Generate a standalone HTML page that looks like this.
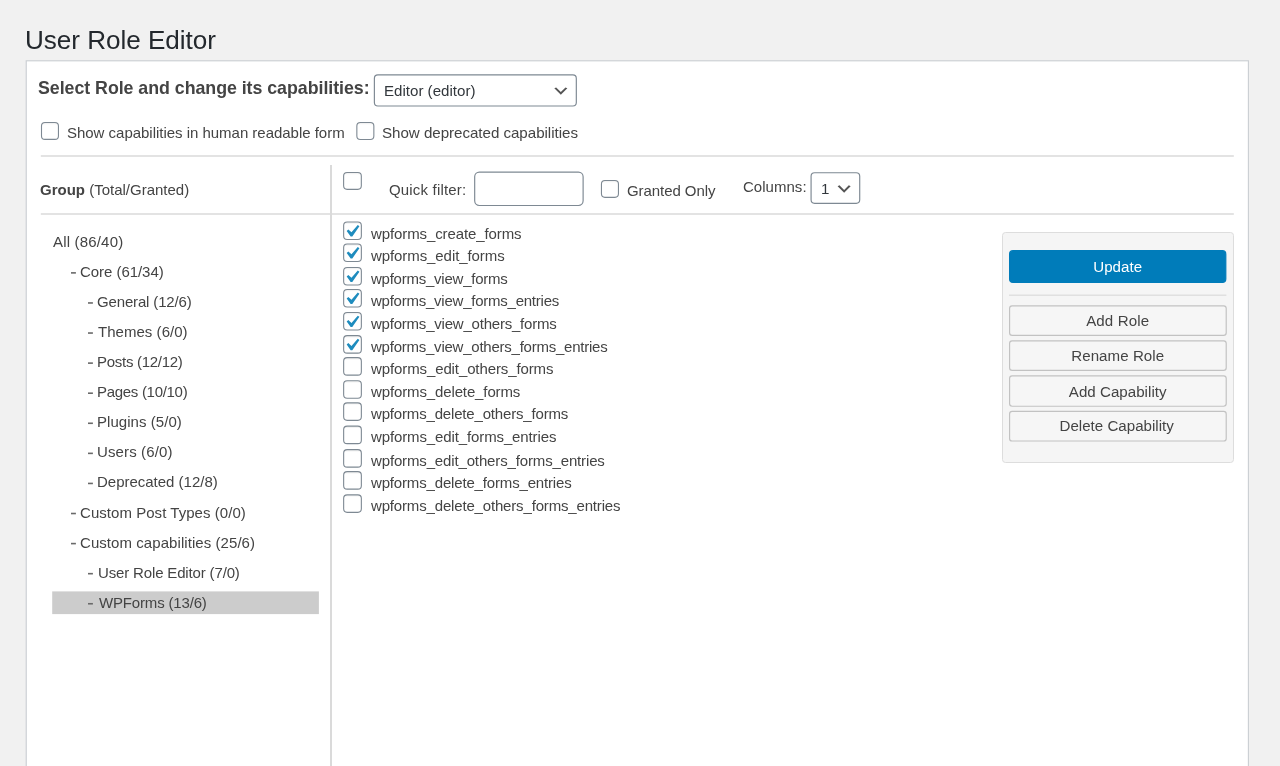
<!DOCTYPE html>
<html><head><meta charset="utf-8">
<style>
html,body{margin:0;padding:0;}
body{width:1280px;height:766px;overflow:hidden;background:#f1f1f1;font-family:"Liberation Sans",sans-serif;color:#444444;position:relative;}
.a{position:absolute;white-space:nowrap;will-change:transform;}
svg.bg{position:absolute;left:0;top:0;}
</style></head><body>
<svg class="bg" width="1280" height="766" viewBox="0 0 1280 766">
<rect x="0" y="0" width="1280" height="766" fill="#f1f1f1"/>
<rect x="26.253" y="60.783" width="1222.163" height="738.633" rx="0.000" fill="#fff" stroke="#ccd0d4" stroke-width="1.167" />
<rect x="52.2" y="591.4" width="266.7" height="22.7" fill="#cccccc"/>
<rect x="40.8" y="155" width="1193" height="2" fill="#e3e3e3"/>
<rect x="40.8" y="213" width="1193" height="2" fill="#e3e3e3"/>
<rect x="330" y="165" width="2" height="620" fill="#dadada"/>
<g><rect x="41.500" y="122.500" width="16.950" height="16.900" rx="3.500" fill="#fff" stroke="#7e8993" stroke-width="1.100" /><rect x="42.050" y="123.050" width="15.850" height="1.2" fill="rgba(0,0,0,0.05)" rx="1"/></g>
<g><rect x="356.850" y="122.550" width="17.000" height="16.900" rx="3.500" fill="#fff" stroke="#7e8993" stroke-width="1.100" /><rect x="357.400" y="123.100" width="15.900" height="1.2" fill="rgba(0,0,0,0.05)" rx="1"/></g>
<rect x="374.383" y="74.883" width="201.933" height="31.133" rx="3.500" fill="#fff" stroke="#7e8993" stroke-width="1.167" />
<g transform="translate(551.500,81.800) scale(0.9333)"><path d="M5 6l5 5 5-5 2 1-7 7-7-7 2-1z" fill="#555"/></g>
<g><rect x="343.620" y="172.450" width="17.700" height="16.900" rx="3.500" fill="#fff" stroke="#7e8993" stroke-width="1.100" /><rect x="344.170" y="173.000" width="16.600" height="1.2" fill="rgba(0,0,0,0.05)" rx="1"/></g>
<rect x="474.683" y="172.083" width="108.433" height="33.433" rx="4.667" fill="#fff" stroke="#7e8993" stroke-width="1.167" />
<g><rect x="601.450" y="180.450" width="17.000" height="16.900" rx="3.500" fill="#fff" stroke="#7e8993" stroke-width="1.100" /><rect x="602.000" y="181.000" width="15.900" height="1.2" fill="rgba(0,0,0,0.05)" rx="1"/></g>
<rect x="811.083" y="172.783" width="48.633" height="30.533" rx="3.500" fill="#fff" stroke="#7e8993" stroke-width="1.167" />
<g transform="translate(834.800,179.700) scale(0.9333)"><path d="M5 6l5 5 5-5 2 1-7 7-7-7 2-1z" fill="#555"/></g>
<g><rect x="343.650" y="221.950" width="17.700" height="17.500" rx="3.500" fill="#fff" stroke="#7e8993" stroke-width="1.100" /><rect x="344.200" y="222.500" width="16.600" height="1.2" fill="rgba(0,0,0,0.05)" rx="1"/><g transform="translate(339.600,219.067) scale(1.225)"><path d="M14.83 4.89l1.34.94-5.81 8.38H9.02L5.78 9.67l1.34-1.25 2.57 2.4z" fill="#1e8cbe"/></g></g>
<g><rect x="343.650" y="243.950" width="17.700" height="17.500" rx="3.500" fill="#fff" stroke="#7e8993" stroke-width="1.100" /><rect x="344.200" y="244.500" width="16.600" height="1.2" fill="rgba(0,0,0,0.05)" rx="1"/><g transform="translate(339.600,241.067) scale(1.225)"><path d="M14.83 4.89l1.34.94-5.81 8.38H9.02L5.78 9.67l1.34-1.25 2.57 2.4z" fill="#1e8cbe"/></g></g>
<g><rect x="343.650" y="267.450" width="17.700" height="17.500" rx="3.500" fill="#fff" stroke="#7e8993" stroke-width="1.100" /><rect x="344.200" y="268.000" width="16.600" height="1.2" fill="rgba(0,0,0,0.05)" rx="1"/><g transform="translate(339.600,264.567) scale(1.225)"><path d="M14.83 4.89l1.34.94-5.81 8.38H9.02L5.78 9.67l1.34-1.25 2.57 2.4z" fill="#1e8cbe"/></g></g>
<g><rect x="343.650" y="289.450" width="17.700" height="17.500" rx="3.500" fill="#fff" stroke="#7e8993" stroke-width="1.100" /><rect x="344.200" y="290.000" width="16.600" height="1.2" fill="rgba(0,0,0,0.05)" rx="1"/><g transform="translate(339.600,286.567) scale(1.225)"><path d="M14.83 4.89l1.34.94-5.81 8.38H9.02L5.78 9.67l1.34-1.25 2.57 2.4z" fill="#1e8cbe"/></g></g>
<g><rect x="343.650" y="312.550" width="17.700" height="17.500" rx="3.500" fill="#fff" stroke="#7e8993" stroke-width="1.100" /><rect x="344.200" y="313.100" width="16.600" height="1.2" fill="rgba(0,0,0,0.05)" rx="1"/><g transform="translate(339.600,309.667) scale(1.225)"><path d="M14.83 4.89l1.34.94-5.81 8.38H9.02L5.78 9.67l1.34-1.25 2.57 2.4z" fill="#1e8cbe"/></g></g>
<g><rect x="343.650" y="335.650" width="17.700" height="17.500" rx="3.500" fill="#fff" stroke="#7e8993" stroke-width="1.100" /><rect x="344.200" y="336.200" width="16.600" height="1.2" fill="rgba(0,0,0,0.05)" rx="1"/><g transform="translate(339.600,332.767) scale(1.225)"><path d="M14.83 4.89l1.34.94-5.81 8.38H9.02L5.78 9.67l1.34-1.25 2.57 2.4z" fill="#1e8cbe"/></g></g>
<g><rect x="343.650" y="357.650" width="17.700" height="17.500" rx="3.500" fill="#fff" stroke="#7e8993" stroke-width="1.100" /><rect x="344.200" y="358.200" width="16.600" height="1.2" fill="rgba(0,0,0,0.05)" rx="1"/></g>
<g><rect x="343.650" y="380.750" width="17.700" height="17.500" rx="3.500" fill="#fff" stroke="#7e8993" stroke-width="1.100" /><rect x="344.200" y="381.300" width="16.600" height="1.2" fill="rgba(0,0,0,0.05)" rx="1"/></g>
<g><rect x="343.650" y="402.850" width="17.700" height="17.500" rx="3.500" fill="#fff" stroke="#7e8993" stroke-width="1.100" /><rect x="344.200" y="403.400" width="16.600" height="1.2" fill="rgba(0,0,0,0.05)" rx="1"/></g>
<g><rect x="343.650" y="426.150" width="17.700" height="17.500" rx="3.500" fill="#fff" stroke="#7e8993" stroke-width="1.100" /><rect x="344.200" y="426.700" width="16.600" height="1.2" fill="rgba(0,0,0,0.05)" rx="1"/></g>
<g><rect x="343.650" y="449.650" width="17.700" height="17.500" rx="3.500" fill="#fff" stroke="#7e8993" stroke-width="1.100" /><rect x="344.200" y="450.200" width="16.600" height="1.2" fill="rgba(0,0,0,0.05)" rx="1"/></g>
<g><rect x="343.650" y="471.650" width="17.700" height="17.500" rx="3.500" fill="#fff" stroke="#7e8993" stroke-width="1.100" /><rect x="344.200" y="472.200" width="16.600" height="1.2" fill="rgba(0,0,0,0.05)" rx="1"/></g>
<g><rect x="343.650" y="494.850" width="17.700" height="17.500" rx="3.500" fill="#fff" stroke="#7e8993" stroke-width="1.100" /><rect x="344.200" y="495.400" width="16.600" height="1.2" fill="rgba(0,0,0,0.05)" rx="1"/></g>
<rect x="1002.5" y="232.5" width="231" height="230" rx="3" fill="#f5f5f5" stroke="#dddddd" stroke-width="1"/>
<rect x="1009.583" y="250.683" width="216.233" height="31.833" rx="3.500" fill="#007cba" stroke="#007cba" stroke-width="1.167" />
<rect x="1009" y="294.5" width="217.4" height="1.5" fill="#e0e0e0"/>
<rect x="1009.583" y="305.883" width="216.633" height="29.533" rx="2.600" fill="#f6f6f6" stroke="#c2c2c2" stroke-width="1.167" />
<rect x="1009.583" y="340.883" width="216.633" height="29.533" rx="2.600" fill="#f6f6f6" stroke="#c2c2c2" stroke-width="1.167" />
<rect x="1009.583" y="375.883" width="216.633" height="30.333" rx="2.600" fill="#f6f6f6" stroke="#c2c2c2" stroke-width="1.167" />
<rect x="1009.583" y="411.383" width="216.633" height="29.633" rx="2.600" fill="#f6f6f6" stroke="#c2c2c2" stroke-width="1.167" />
<rect x="71.00" y="272.08" width="4.9" height="1.6" fill="#6a6a6a"/>
<rect x="88.00" y="302.16" width="4.9" height="1.6" fill="#6a6a6a"/>
<rect x="88.00" y="332.24" width="4.9" height="1.6" fill="#6a6a6a"/>
<rect x="88.00" y="362.32" width="4.9" height="1.6" fill="#6a6a6a"/>
<rect x="88.00" y="392.40" width="4.9" height="1.6" fill="#6a6a6a"/>
<rect x="88.00" y="422.48" width="4.9" height="1.6" fill="#6a6a6a"/>
<rect x="88.00" y="452.56" width="4.9" height="1.6" fill="#6a6a6a"/>
<rect x="88.00" y="482.64" width="4.9" height="1.6" fill="#6a6a6a"/>
<rect x="71.00" y="512.72" width="4.9" height="1.6" fill="#6a6a6a"/>
<rect x="71.00" y="542.80" width="4.9" height="1.6" fill="#6a6a6a"/>
<rect x="88.00" y="572.88" width="4.9" height="1.6" fill="#6a6a6a"/>
<rect x="88.00" y="602.96" width="4.9" height="1.6" fill="#6a6a6a"/>
</svg>
<div class="a" id="t0" style="left:24.60px;top:24.50px;font-size:26.1px;line-height:31.32px;color:#23282d;font-weight:400;letter-spacing:-0.0267px;">User Role Editor</div>
<div class="a" id="t1" style="left:38.40px;top:77.85px;font-size:17.8px;line-height:21.36px;color:#444444;font-weight:700;letter-spacing:-0.0359px;">Select Role and change its capabilities:</div>
<div class="a" id="t2" style="left:383.60px;top:81.71px;font-size:15.1px;line-height:18.12px;color:#32373c;font-weight:400;">Editor (editor)</div>
<div class="a" id="t3" style="left:66.80px;top:124.30px;font-size:15.0px;line-height:18.0px;color:#444444;font-weight:400;letter-spacing:-0.0218px;">Show capabilities in human readable form</div>
<div class="a" id="t4" style="left:382.20px;top:124.36px;font-size:15.15px;line-height:18.18px;color:#444444;font-weight:400;letter-spacing:-0.0370px;">Show deprecated capabilities</div>
<div class="a" id="t5" style="left:40.20px;top:180.80px;font-size:15.0px;line-height:18.0px;color:#444444;font-weight:400;"><b>Group</b> (Total/Granted)</div>
<div class="a" id="t6" style="left:388.80px;top:181.30px;font-size:15.0px;line-height:18.0px;color:#444444;font-weight:400;letter-spacing:0.1750px;">Quick filter:</div>
<div class="a" id="t7" style="left:627.30px;top:182.40px;font-size:15.0px;line-height:18.0px;color:#444444;font-weight:400;letter-spacing:-0.0727px;">Granted Only</div>
<div class="a" id="t8" style="left:742.70px;top:177.90px;font-size:15.0px;line-height:18.0px;color:#444444;font-weight:400;letter-spacing:0.0286px;">Columns:</div>
<div class="a" id="t9" style="left:821.00px;top:179.81px;font-size:15.1px;line-height:18.12px;color:#32373c;font-weight:400;">1</div>
<div class="a" id="t10" style="left:53.40px;top:232.70px;font-size:15.0px;line-height:18.0px;color:#444444;font-weight:400;letter-spacing:0.1800px;">All (86/40)</div>
<div class="a" id="t11" style="left:80.30px;top:262.78px;font-size:15.0px;line-height:18.0px;color:#444444;font-weight:400;letter-spacing:-0.0455px;">Core (61/34)</div>
<div class="a" id="t12" style="left:96.80px;top:292.86px;font-size:15.0px;line-height:18.0px;color:#444444;font-weight:400;letter-spacing:-0.1538px;">General (12/6)</div>
<div class="a" id="t13" style="left:98.00px;top:322.94px;font-size:15.0px;line-height:18.0px;color:#444444;font-weight:400;letter-spacing:0.0364px;">Themes (6/0)</div>
<div class="a" id="t14" style="left:97.00px;top:353.02px;font-size:15.0px;line-height:18.0px;color:#444444;font-weight:400;letter-spacing:-0.2833px;">Posts (12/12)</div>
<div class="a" id="t15" style="left:97.00px;top:383.10px;font-size:15.0px;line-height:18.0px;color:#444444;font-weight:400;letter-spacing:-0.3000px;">Pages (10/10)</div>
<div class="a" id="t16" style="left:97.00px;top:413.18px;font-size:15.0px;line-height:18.0px;color:#444444;font-weight:400;letter-spacing:0.0500px;">Plugins (5/0)</div>
<div class="a" id="t17" style="left:97.00px;top:443.26px;font-size:15.0px;line-height:18.0px;color:#444444;font-weight:400;letter-spacing:0.1200px;">Users (6/0)</div>
<div class="a" id="t18" style="left:97.00px;top:473.34px;font-size:15.0px;line-height:18.0px;color:#444444;font-weight:400;letter-spacing:-0.0125px;">Deprecated (12/8)</div>
<div class="a" id="t19" style="left:79.80px;top:504.02px;font-size:15.0px;line-height:18.0px;color:#444444;font-weight:400;letter-spacing:0.0455px;">Custom Post Types (0/0)</div>
<div class="a" id="t20" style="left:79.80px;top:533.50px;font-size:15.0px;line-height:18.0px;color:#444444;font-weight:400;letter-spacing:0.0640px;">Custom capabilities (25/6)</div>
<div class="a" id="t21" style="left:97.80px;top:563.58px;font-size:15.0px;line-height:18.0px;color:#444444;font-weight:400;letter-spacing:-0.1524px;">User Role Editor (7/0)</div>
<div class="a" id="t22" style="left:98.60px;top:593.66px;font-size:15.0px;line-height:18.0px;color:#444444;font-weight:400;letter-spacing:-0.1692px;">WPForms (13/6)</div>
<div class="a" id="t23" style="left:371.10px;top:224.60px;font-size:15.0px;line-height:18.0px;color:#444444;font-weight:400;letter-spacing:-0.1053px;">wpforms_create_forms</div>
<div class="a" id="t24" style="left:370.80px;top:246.50px;font-size:15.0px;line-height:18.0px;color:#444444;font-weight:400;letter-spacing:-0.0824px;">wpforms_edit_forms</div>
<div class="a" id="t25" style="left:371.10px;top:269.70px;font-size:15.0px;line-height:18.0px;color:#444444;font-weight:400;letter-spacing:-0.2412px;">wpforms_view_forms</div>
<div class="a" id="t26" style="left:370.80px;top:291.70px;font-size:15.0px;line-height:18.0px;color:#444444;font-weight:400;letter-spacing:-0.2400px;">wpforms_view_forms_entries</div>
<div class="a" id="t27" style="left:371.10px;top:314.70px;font-size:15.0px;line-height:18.0px;color:#444444;font-weight:400;letter-spacing:-0.2167px;">wpforms_view_others_forms</div>
<div class="a" id="t28" style="left:371.10px;top:337.70px;font-size:15.0px;line-height:18.0px;color:#444444;font-weight:400;letter-spacing:-0.2375px;">wpforms_view_others_forms_entries</div>
<div class="a" id="t29" style="left:370.80px;top:360.00px;font-size:15.0px;line-height:18.0px;color:#444444;font-weight:400;letter-spacing:-0.1083px;">wpforms_edit_others_forms</div>
<div class="a" id="t30" style="left:371.10px;top:383.20px;font-size:15.0px;line-height:18.0px;color:#444444;font-weight:400;letter-spacing:-0.1263px;">wpforms_delete_forms</div>
<div class="a" id="t31" style="left:371.10px;top:405.40px;font-size:15.0px;line-height:18.0px;color:#444444;font-weight:400;letter-spacing:-0.1692px;">wpforms_delete_others_forms</div>
<div class="a" id="t32" style="left:370.80px;top:428.40px;font-size:15.0px;line-height:18.0px;color:#444444;font-weight:400;letter-spacing:-0.1200px;">wpforms_edit_forms_entries</div>
<div class="a" id="t33" style="left:371.10px;top:451.50px;font-size:15.0px;line-height:18.0px;color:#444444;font-weight:400;letter-spacing:-0.1437px;">wpforms_edit_others_forms_entries</div>
<div class="a" id="t34" style="left:370.80px;top:473.50px;font-size:15.0px;line-height:18.0px;color:#444444;font-weight:400;letter-spacing:-0.1630px;">wpforms_delete_forms_entries</div>
<div class="a" id="t35" style="left:371.10px;top:496.80px;font-size:15.0px;line-height:18.0px;color:#444444;font-weight:400;letter-spacing:-0.1647px;">wpforms_delete_others_forms_entries</div>
<div class="a" id="t36" style="left:1008.80px;top:257.91px;font-size:15.1px;line-height:18.12px;color:#ffffff;font-weight:400;width:217.4px;text-align:center;letter-spacing:0.0600px;">Update</div>
<div class="a" id="t37" style="left:1009.10px;top:312.21px;font-size:15.1px;line-height:18.12px;color:#444444;font-weight:400;width:217.4px;text-align:center;letter-spacing:0.1286px;">Add Role</div>
<div class="a" id="t38" style="left:1008.80px;top:346.61px;font-size:15.1px;line-height:18.12px;color:#444444;font-weight:400;width:217.4px;text-align:center;letter-spacing:0.0600px;">Rename Role</div>
<div class="a" id="t39" style="left:1008.80px;top:382.51px;font-size:15.1px;line-height:18.12px;color:#444444;font-weight:400;width:217.4px;text-align:center;letter-spacing:0.0308px;">Add Capability</div>
<div class="a" id="t40" style="left:1007.80px;top:416.81px;font-size:15.1px;line-height:18.12px;color:#444444;font-weight:400;width:217.4px;text-align:center;letter-spacing:0.0125px;">Delete Capability</div>
</body></html>
